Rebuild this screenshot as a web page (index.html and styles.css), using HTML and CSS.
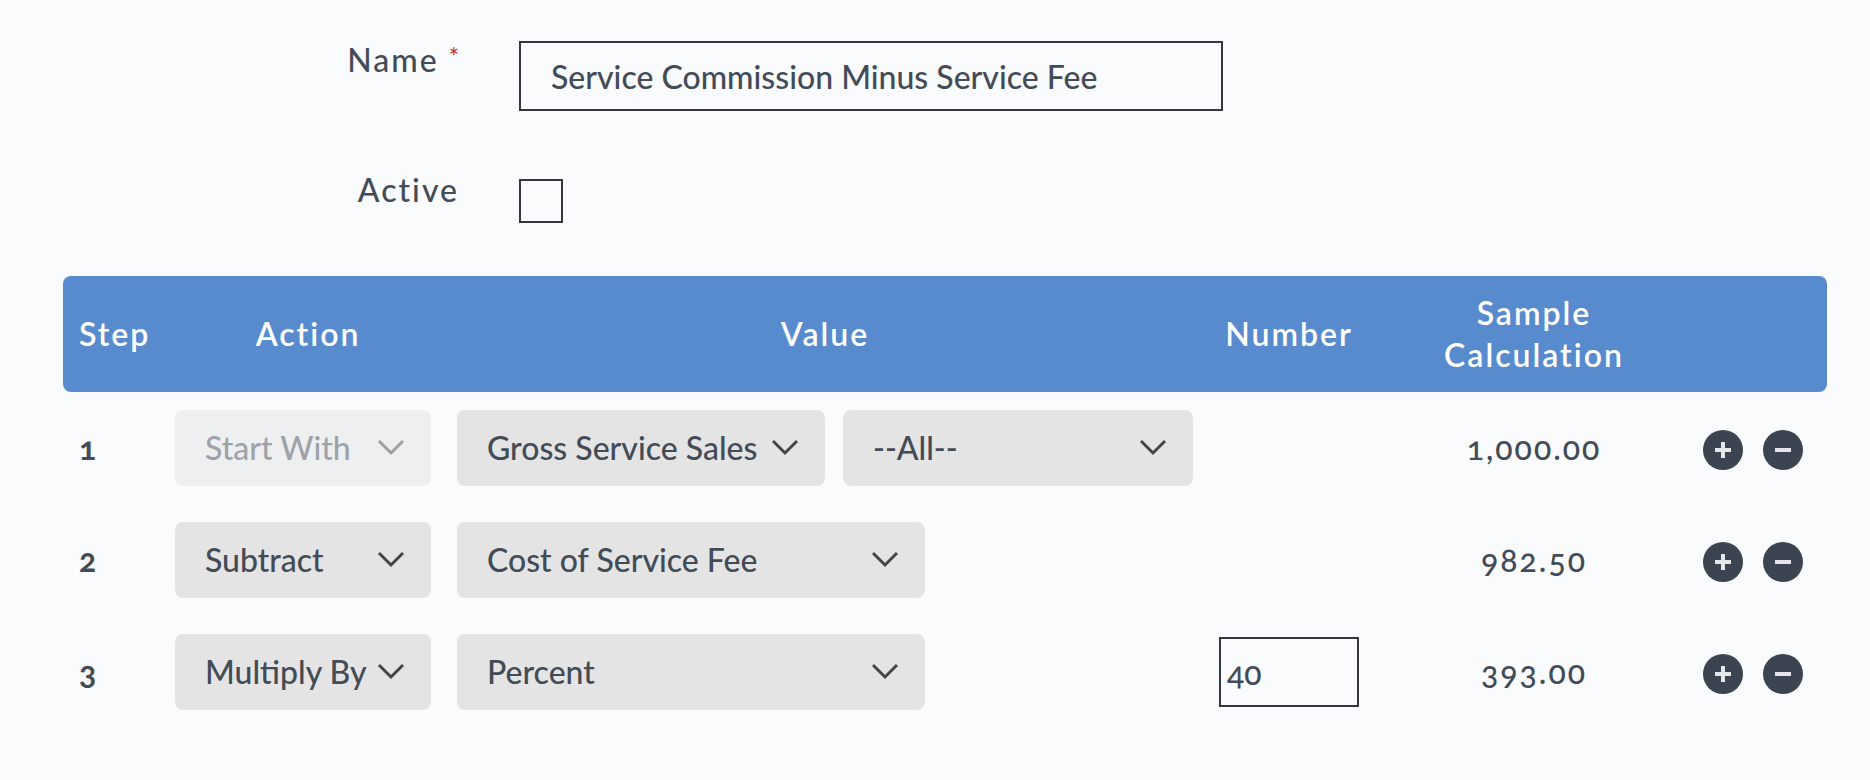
FILE: index.html
```html
<!DOCTYPE html>
<html lang="en">
<head>
  <meta charset="UTF-8" />
  <meta name="viewport" content="width=device-width, initial-scale=1.0"/>
  <title>Commission Formula</title>
  <link rel="stylesheet" href="styles.css">
</head>
<body>
  <form class="formula">
    <div class="field">
      <label class="field-label" for="name">Name <span class="required">*</span></label>
      <input class="name-input" type="text" id="name" value="Service Commission Minus Service Fee" required />
    </div>
    <div class="field">
      <label class="field-label" for="active">Active</label>
      <input class="active-check" type="checkbox" id="active" />
    </div>

    <table class="steps">
      <thead>
        <tr>
          <th class="col-step">Step</th>
          <th class="col-action">Action</th>
          <th class="col-value">Value</th>
          <th class="col-number">Number</th>
          <th class="col-sample">Sample<br>Calculation</th>
          <th class="col-buttons"></th>
        </tr>
      </thead>
      <tbody>
        <tr>
          <td class="col-step">1</td>
          <td class="col-action">
            <select class="select" aria-label="Action 1" disabled><option>Start With</option></select>
          </td>
          <td class="col-value">
            <div class="values">
              <select class="select value-type" aria-label="Value 1"><option>Gross Service Sales</option></select>
              <select class="select value-filter" aria-label="Filter 1"><option>--All--</option></select>
            </div>
          </td>
          <td class="col-number"></td>
          <td class="col-sample">1,000.00</td>
          <td class="col-buttons">
            <div class="buttons">
              <button class="round" type="button" aria-label="Add step"><svg viewBox="0 0 40 40"><path d="M12 20h16M20 12v16"/></svg></button>
              <button class="round" type="button" aria-label="Remove step"><svg viewBox="0 0 40 40"><path d="M12 20h16"/></svg></button>
            </div>
          </td>
        </tr>
        <tr>
          <td class="col-step">2</td>
          <td class="col-action">
            <select class="select" aria-label="Action 2"><option>Subtract</option></select>
          </td>
          <td class="col-value">
            <div class="values">
              <select class="select value-single" aria-label="Value 2"><option>Cost of Service Fee</option></select>
            </div>
          </td>
          <td class="col-number"></td>
          <td class="col-sample">982.50</td>
          <td class="col-buttons">
            <div class="buttons">
              <button class="round" type="button" aria-label="Add step"><svg viewBox="0 0 40 40"><path d="M12 20h16M20 12v16"/></svg></button>
              <button class="round" type="button" aria-label="Remove step"><svg viewBox="0 0 40 40"><path d="M12 20h16"/></svg></button>
            </div>
          </td>
        </tr>
        <tr>
          <td class="col-step">3</td>
          <td class="col-action">
            <select class="select" aria-label="Action 3"><option>Multiply By</option></select>
          </td>
          <td class="col-value">
            <div class="values">
              <select class="select value-single" aria-label="Value 3"><option>Percent</option></select>
            </div>
          </td>
          <td class="col-number"><input class="number-input" type="text" aria-label="Number 3" value="40" /></td>
          <td class="col-sample">393.00</td>
          <td class="col-buttons">
            <div class="buttons">
              <button class="round" type="button" aria-label="Add step"><svg viewBox="0 0 40 40"><path d="M12 20h16M20 12v16"/></svg></button>
              <button class="round" type="button" aria-label="Remove step"><svg viewBox="0 0 40 40"><path d="M12 20h16"/></svg></button>
            </div>
          </td>
        </tr>
      </tbody>
    </table>
  </form>
</body>
</html>
```

FILE: styles.css
```css
* {
  box-sizing: border-box;
}
body {
  margin: 0;
  border-top: 1px solid #fff;
  background: #fafbfd;
  color: #434b57;
  font-family: Lato, sans-serif;
  font-size: 32px;
  font-weight: 500;
  line-height: 42px;
  font-variant-numeric: oldstyle-nums;
}
input, select {
  font: inherit;
  color: inherit;
}
.formula {
  padding: 40px 43px 0 63px;
}
.field {
  display: flex;
  align-items: flex-start;
  gap: 60px;
  margin-bottom: 60px;
}
.field + .field {
  margin-bottom: 53px;
}
.field-label {
  width: 396px;
  line-height: 38px;
  text-align: right;
  letter-spacing: 2px;
}
.required {
  color: #c0392b;
  font-size: 24px;
  line-height: 1;
  vertical-align: 6px;
  letter-spacing: 0;
}
.name-input {
  width: 704px;
  height: 70px;
  padding: 0 30px;
  border: 2px solid #36363d;
  background: transparent;
}
.active-check {
  appearance: none;
  width: 44px;
  height: 44px;
  margin: 8px 0 0;
  border: 2px solid #36363d;
}

/* steps table */
.steps {
  width: 100%;
  table-layout: fixed;
  border-spacing: 0;
}
th {
  height: 116px;
  padding: 0;
  background: #588bcd;
  color: #fff;
  font-weight: 600;
  letter-spacing: 2px;
}
th:first-child {
  border-radius: 8px 0 0 8px;
}
th:last-child {
  border-radius: 0 8px 8px 0;
}
td {
  height: 112px;
  padding: 0;
}
.col-step {
  width: 94px;
  padding-left: 16px;
  text-align: left;
}
td.col-step {
  font-weight: 700;
}
.col-action {
  width: 284px;
  padding-left: 18px;
}
.col-value {
  padding-left: 16px;
}
.col-number {
  width: 192px;
  text-align: center;
}
.col-sample {
  width: 298px;
  text-align: center;
}
td.col-sample {
  letter-spacing: 2px;
}
.col-buttons {
  width: 144px;
  padding: 4px 0 0 20px;
}
.values {
  display: flex;
  gap: 18px;
}
.select {
  appearance: none;
  display: block;
  width: 256px;
  height: 76px;
  padding: 0 0 0 30px;
  border: none;
  border-radius: 8px;
  background: #e4e4e4 url("data:image/svg+xml,%3Csvg xmlns='http://www.w3.org/2000/svg' width='28' height='18' fill='none' stroke='%23454545' stroke-width='3'%3E%3Cpath d='M2 2l12 12L26 2'/%3E%3C/svg%3E") no-repeat right 26px center;
}
.select:disabled {
  opacity: 0.5;
}
.value-type {
  width: 368px;
}
.value-filter {
  width: 350px;
}
.value-single {
  width: 468px;
}
.number-input {
  display: block;
  width: 140px;
  height: 70px;
  margin: 0 auto;
  padding: 0 6px;
  border: 2px solid #36363d;
  background: transparent;
}
.buttons {
  display: flex;
  gap: 20px;
}
.round {
  width: 40px;
  height: 40px;
  padding: 0;
  border: none;
  border-radius: 50%;
  background: #3b4450;
  cursor: pointer;
}
.round svg {
  display: block;
  stroke: #e4e6ea;
  stroke-width: 4;
}
```
